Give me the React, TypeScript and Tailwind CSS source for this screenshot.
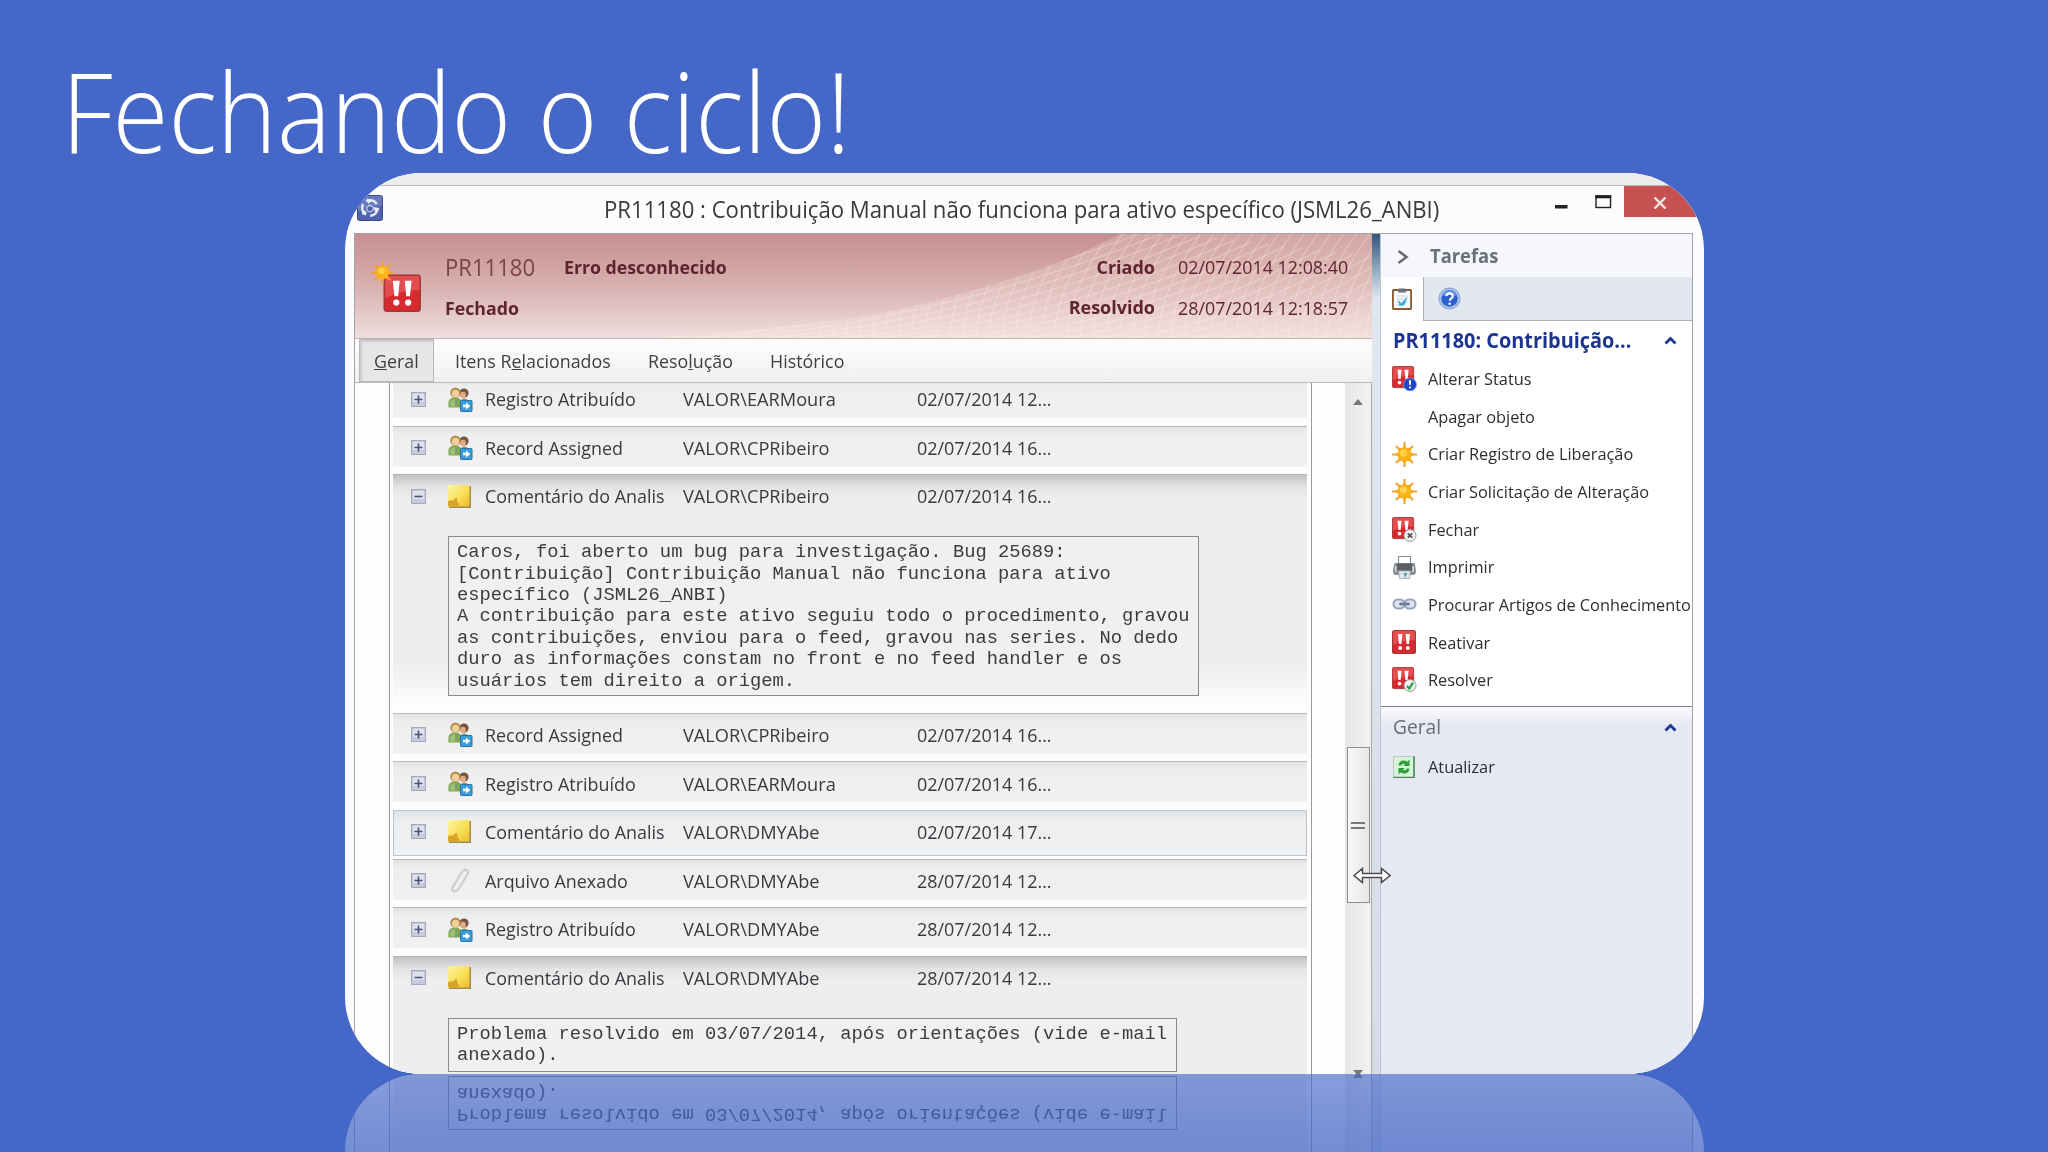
import type { ReactNode } from "react";
import clsx from "clsx";

interface HistoryRow {
  icon: "users" | "note" | "clip";
  label: string;
  user: string;
  date: string;
  selected?: boolean;
  comment?: string[];
  boxClass?: string;
}

interface Task {
  label: string;
  icon: ReactNode;
}

const history: HistoryRow[] = [
  { icon: "users", label: "Registro Atribuído", user: "VALOR\\EARMoura", date: "02/07/2014 12..." },
  { icon: "users", label: "Record Assigned", user: "VALOR\\CPRibeiro", date: "02/07/2014 16..." },
  {
    icon: "note",
    label: "Comentário do Analis",
    user: "VALOR\\CPRibeiro",
    date: "02/07/2014 16...",
    boxClass: "h-[160px] w-[751px]",
    comment: [
      "Caros, foi aberto um bug para investigação. Bug 25689:",
      "[Contribuição] Contribuição Manual não funciona para ativo",
      "específico (JSML26_ANBI)",
      "A contribuição para este ativo seguiu todo o procedimento, gravou",
      "as contribuições, enviou para o feed, gravou nas series. No dedo",
      "duro as informações constam no front e no feed handler e os",
      "usuários tem direito a origem.",
    ],
  },
  { icon: "users", label: "Record Assigned", user: "VALOR\\CPRibeiro", date: "02/07/2014 16..." },
  { icon: "users", label: "Registro Atribuído", user: "VALOR\\EARMoura", date: "02/07/2014 16..." },
  { icon: "note", label: "Comentário do Analis", user: "VALOR\\DMYAbe", date: "02/07/2014 17...", selected: true },
  { icon: "clip", label: "Arquivo Anexado", user: "VALOR\\DMYAbe", date: "28/07/2014 12..." },
  { icon: "users", label: "Registro Atribuído", user: "VALOR\\DMYAbe", date: "28/07/2014 12..." },
  {
    icon: "note",
    label: "Comentário do Analis",
    user: "VALOR\\DMYAbe",
    date: "28/07/2014 12...",
    boxClass: "h-[54px] w-[729px]",
    comment: [
      "Problema resolvido em 03/07/2014, após orientações (vide e-mail",
      "anexado).",
    ],
  },
];

function SunShape() {
  return (
    <>
      <path
        d="M12 0v24M0 12h24M3.800 3.800l16.400 16.400M20.200 3.800L3.800 20.200"
        stroke="#f0a043"
        strokeWidth="2"
        fill="none"
      />
      <path
        d="M12 2.500l2.200 3.400 4.500-.9-.9 4.500 3.700 2.500-3.700 2.500.9 4.500-4.500-.9L12 21.500l-2.200-3.400-4.500.9.9-4.500L2.500 12l3.700-2.500-.9-4.500 4.500.9z"
        fill="#f7a922"
      />
      <circle cx="12" cy="12" r="6.300" fill="#fbb31a" />
      <circle cx="11" cy="10.500" r="3.400" fill="#ffd24a" />
    </>
  );
}

function SunIcon() {
  return (
    <svg viewBox="0 0 24 24" className="size-[25px]">
      <SunShape />
    </svg>
  );
}

// two white exclamation marks on a red tile, 24x24
function ProblemShape() {
  return (
    <>
      <rect x="0.5" y="0.5" width="23" height="23" rx="1.5" fill="#d62a2e" stroke="#a33636" />
      <path d="M1 1h22v9Q12 10 1 15z" fill="#ee6a6a" opacity="0.55" />
      <path d="M6 4h4.400l-1 10H7zM13.600 4H18l-1 10h-2.400z" fill="#fff" />
      <circle cx="8.200" cy="18" r="2" fill="#fff" />
      <circle cx="15.800" cy="18" r="2" fill="#fff" />
    </>
  );
}

function ProblemIcon({ badge }: { badge?: "alert" | "close" | "check" }) {
  return (
    <svg viewBox="0 0 25 25" className="size-[25px]">
      <g transform={badge ? "scale(0.92)" : "scale(1)"}>
        <ProblemShape />
      </g>
      {badge === "alert" && (
        <>
          <circle cx="18" cy="18.500" r="6.500" fill="#1f46c4" stroke="#7d95e0" strokeWidth="0.800" />
          <path d="M16.800 14.200h2.400l-.5 5h-1.400z" fill="#fff" />
          <circle cx="18" cy="21.500" r="1.100" fill="#fff" />
        </>
      )}
      {badge === "close" && (
        <>
          <circle cx="18" cy="18.500" r="6" fill="#f1f1f1" stroke="#999" />
          <path d="M15.800 16.300l4.400 4.400M20.200 16.300l-4.400 4.400" stroke="#555" strokeWidth="1.800" />
        </>
      )}
      {badge === "check" && (
        <>
          <circle cx="18" cy="18.500" r="6" fill="#f1f1f1" stroke="#999" />
          <path d="M15 19l2.300 2.600 3.600-6" stroke="#2ba24c" strokeWidth="2.200" fill="none" />
        </>
      )}
    </svg>
  );
}

function PrinterIcon() {
  return (
    <svg viewBox="0 0 25 25" className="size-[25px]">
      <path d="M6.500 9V1.500h12V9" fill="#fff" stroke="#8b9096" strokeWidth="1.200" />
      <path d="M2 10q0-2 2-2h17q2 0 2 2l1 6q0 4-3 4H4q-3 0-3-4z" fill="#858a90" />
      <rect x="5" y="8.500" width="15" height="7" fill="#5b5f65" />
      <rect x="3" y="11" width="1.600" height="6" fill="#d5d8db" />
      <rect x="20.400" y="11" width="1.600" height="6" fill="#d5d8db" />
      <path d="M6.500 16h12l-1 7.500h-10z" fill="#dde6ec" stroke="#9aa3aa" strokeWidth="0.800" />
      <path d="M11.500 18h4l-2.500 4.500z" fill="#4d9aa5" />
    </svg>
  );
}

function LinkIcon() {
  return (
    <svg viewBox="0 0 25 13" className="h-[13px] w-[25px]">
      <rect x="1.500" y="1.500" width="11" height="9" rx="4.500" fill="#dfe6f0" stroke="#93a3bd" strokeWidth="2" />
      <rect x="12.500" y="1.500" width="11" height="9" rx="4.500" fill="#dfe6f0" stroke="#93a3bd" strokeWidth="2" />
      <rect x="7" y="4.600" width="11" height="3" rx="1.500" fill="#6f809c" />
    </svg>
  );
}

function RefreshIcon() {
  return (
    <svg viewBox="0 0 22 22" className="ml-px size-[22px]">
      <rect x="0.500" y="0.500" width="21" height="21" fill="#d9f2da" stroke="#b7cdb8" />
      <path d="M21 0.500v21H0.500" stroke="#4a8a56" strokeWidth="1.600" fill="none" />
      <path d="M5.500 9.500Q6 4.500 11 4.500q2 0 3.200 1.200L16.500 3.800V10h-6.300l2-2Q9 6.800 8.400 9.500z" fill="#2c9e3a" />
      <path d="M16.500 12.500q-.5 5-5.500 5-2 0-3.200-1.200L5.500 18.200V12h6.300l-2 2q3.200 1.200 3.800-1.500z" fill="#2c9e3a" />
    </svg>
  );
}

function ClipboardIcon() {
  return (
    <svg viewBox="0 0 20 22" className="h-[22px] w-5">
      <rect x="0.900" y="2" width="18.200" height="19" rx="1" fill="#f7fafc" stroke="#8a5a35" strokeWidth="1.900" />
      <rect x="6" y="0.400" width="8" height="4" rx="1" fill="#6b7178" />
      <path d="M4.500 8h11M4.500 11h11M4.500 14h11M4.500 17h8" stroke="#c4d2df" strokeWidth="1" />
      <path d="M6 11.500l3 4 6.500-7-3 8.500-5 1z" fill="#34a7dd" />
    </svg>
  );
}

function HelpIcon() {
  return (
    <svg viewBox="0 0 24 24" className="size-[23px]">
      <circle cx="12" cy="12" r="11" fill="#a9c3ee" stroke="#8099d0" />
      <circle cx="12" cy="12" r="8.600" fill="#2c5fd0" />
      <path d="M4.500 9.500a8 8 0 0 1 15 0q-7.500-3-15 0z" fill="#6f9bea" />
      <path d="M8.700 9.600q.4-3 3.400-3t3.300 2.800q0 1.700-1.800 2.800-1.300.9-1.300 2.200" fill="none" stroke="#fff" strokeWidth="2.200" />
      <circle cx="12.200" cy="17.500" r="1.300" fill="#fff" />
    </svg>
  );
}

function UsersIcon() {
  return (
    <svg viewBox="0 0 25 25" className="size-[25px]">
      <path d="M12 21q-1-9 4-9.500t6 8z" fill="#8c9b76" />
      <circle cx="16" cy="6" r="4.600" fill="#7a5240" />
      <ellipse cx="15" cy="8" rx="2.800" ry="3.200" fill="#e0ac86" />
      <path d="M.5 20.500V15q1-4.500 6.500-4.500T14 15v5.500z" fill="#7ea457" />
      <path d="M2 19.500v-4q1-3 5-3.500v7.500z" fill="#9dbf78" />
      <circle cx="7.500" cy="5.600" r="5.200" fill="#b58a4e" />
      <ellipse cx="7.600" cy="6.600" rx="3.600" ry="3.900" fill="#efd09a" />
      <rect x="12.500" y="13.500" width="11.500" height="11" rx="1" fill="#3a9cd8" stroke="#2773ac" />
      <path d="M15 17.700h3v-2.200l4.300 3.500-4.300 3.500v-2.200h-3z" fill="#fff" />
    </svg>
  );
}

function NoteIcon() {
  return (
    <svg viewBox="0 0 23 23" className="size-[23px]">
      <defs>
        <linearGradient id="note" x1="0" y1="0" x2="1" y2="1">
          <stop offset="0" stopColor="#fdf6a4" />
          <stop offset="0.600" stopColor="#f8dc50" />
          <stop offset="1" stopColor="#e9bb33" />
        </linearGradient>
      </defs>
      <path d="M22 1v21H1" stroke="#a08c4c" strokeWidth="2" fill="none" />
      <rect x="0" y="0" width="21.500" height="21.500" fill="url(#note)" />
      <path d="M0 21.500v-5q3-2 5-.5 1-3 4-3 0 3 1 5 2 1 1 3.500z" fill="#d9a32a" />
    </svg>
  );
}

function ClipIcon() {
  return (
    <svg viewBox="0 0 23 25" className="h-[25px] w-[23px]">
      <path
        d="M5 19L14 4q2.500-3 5-1.500 2 1.800 0 4.500L10.500 21q-2.500 3-5 2-2.500-1.600-.5-4.500l7-11"
        fill="none"
        stroke="#cdced2"
        strokeWidth="2.200"
      />
    </svg>
  );
}

function AppIcon() {
  return (
    <svg viewBox="0 0 26 26" className="size-[26px]">
      <rect x="0.500" y="0.500" width="25" height="25" rx="2" fill="#4f62ab" stroke="#39498a" />
      <path d="M1 1h24v10Q12 10 1 17z" fill="#7c8cc8" opacity="0.600" />
      <circle cx="13" cy="13" r="7.800" fill="none" stroke="#e9edfb" strokeWidth="2.400" strokeDasharray="12 4.300" />
      <path d="M10 3.500l5 2-4 3.500zM22.500 13l-4.500 4-1.500-5zM5 20l.5-6 4.500 3.500z" fill="#e9edfb" />
      <path d="M10 12l3-2 3 2v3.500l-3 1.500-3-1.500z" fill="none" stroke="#c7d0f0" strokeWidth="1.200" />
    </svg>
  );
}

function ExpandIcon({ open }: { open: boolean }) {
  return (
    <svg viewBox="0 0 15 15" className="size-[15px]">
      <rect x="0.700" y="0.700" width="13.600" height="13.600" fill="#dfe1ec" stroke="#a6a9bb" strokeWidth="1.400" />
      <path d="M1.400 10h12.200v3.600H1.400z" fill="#c8cbdb" />
      <path d={open ? "M3.500 7.500h8" : "M3.500 7.500h8M7.500 3.500v8"} stroke="#4a5175" strokeWidth="1.600" />
    </svg>
  );
}

function CaretUp() {
  return (
    <svg viewBox="0 0 13 9" className="h-[9px] w-[13px]">
      <path d="M1.500 7.500L6.500 2.500l5 5" fill="none" stroke="#1d3694" strokeWidth="2.800" />
    </svg>
  );
}

// curved net in the right corner of the form header
function HeaderMesh() {
  const fan = Array.from({ length: 56 }, (_, i) => i);
  return (
    <svg viewBox="0 0 740 104" className="absolute top-0 right-0 h-[104px] w-[740px]">
      <defs>
        <clipPath id="net">
          <path d="M18 104Q150 96 248 79 330 63 428 28 462 14 488 0H740V104z" />
        </clipPath>
      </defs>
      <g clipPath="url(#net)">
        <rect width="740" height="104" fill="#fbe6e2" opacity="0.260" />
        {fan.map((i) => (
          <path
            key={`a${i}`}
            d={`M${150 + i * 13} 110Q${146 + i * 13} 60 ${196 + i * 13} -6`}
            stroke="#fff3ee"
            strokeWidth="1.500"
            opacity="0.260"
            fill="none"
          />
        ))}
        {fan.slice(0, 26).map((i) => (
          <path
            key={`b${i}`}
            d={`M${20 + i * 26} ${105 + i * 0.6}Q${260 + i * 22} ${84 + i * 3} ${500 + i * 17} ${-6 + i * 2}`}
            stroke="#fff3ee"
            strokeWidth="1.500"
            opacity="0.260"
            fill="none"
          />
        ))}
      </g>
    </svg>
  );
}

const tasks: Task[] = [
  { label: "Alterar Status", icon: <ProblemIcon badge="alert" /> },
  { label: "Apagar objeto", icon: null },
  { label: "Criar Registro de Liberação", icon: <SunIcon /> },
  { label: "Criar Solicitação de Alteração", icon: <SunIcon /> },
  { label: "Fechar", icon: <ProblemIcon badge="close" /> },
  { label: "Imprimir", icon: <PrinterIcon /> },
  { label: "Procurar Artigos de Conhecimento", icon: <LinkIcon /> },
  { label: "Reativar", icon: <ProblemIcon /> },
  { label: "Resolver", icon: <ProblemIcon badge="check" /> },
];

function TaskLink({ label, icon }: Task) {
  return (
    <div className="flex h-[37.65px] items-center">
      <span className="ml-[11px] flex w-9 shrink-0 items-center">{icon}</span>
      <span className="origin-left scale-x-[0.960] text-[17px] whitespace-nowrap text-[#2e2e2e]">{label}</span>
    </div>
  );
}

function TitleBar() {
  return (
    <div className="flex h-[47px] shrink-0 items-start bg-[#fcfcfd]">
      <div className="mt-[9px] ml-3">
        <AppIcon />
      </div>
      <div className="mt-1.5 ml-[221px] w-[880px] origin-left scale-x-[0.923] text-2xl leading-[34px] whitespace-nowrap text-[#3a3a3a]">
        PR11180 : Contribuição Manual não funciona para ativo específico (JSML26_ANBI)
      </div>
      <svg viewBox="0 0 60 20" className="mt-[7px] ml-[71px] h-5 w-[60px] shrink-0">
        <rect x="0" y="12" width="12.500" height="3.500" fill="#222" />
        <rect x="41" y="3" width="14.500" height="11.500" fill="none" stroke="#222" strokeWidth="1.400" />
        <rect x="40.300" y="2.300" width="16" height="3" fill="#222" />
      </svg>
      <div className="ml-auto flex h-[31px] w-20 shrink-0 justify-center bg-[#c75050]">
        <svg viewBox="0 0 14 12" className="mt-[11px] mr-[9px] h-3 w-3.5">
          <path d="M1.500 0.500l11 11M12.500 0.500l-11 11" stroke="#f6e4e4" strokeWidth="2.400" />
        </svg>
      </div>
    </div>
  );
}

function FormHeader() {
  return (
    <div className="relative flex h-[105px] shrink-0 border-b border-[#c4b3b3] bg-linear-to-b from-[#c58f8f] via-[#d8b0b0] to-[#efdfde] text-[18px] font-bold text-[#5e2530]">
      <HeaderMesh />
      <svg viewBox="0 0 50 54" className="relative mt-[25px] ml-4 h-[54px] w-[50px]">
        <g transform="translate(12.500 15.500) scale(1.560)">
          <ProblemShape />
        </g>
        <g transform="translate(0 2) scale(0.960)">
          <SunShape />
        </g>
      </svg>
      <div className="relative ml-6 pt-[13px]">
        <div className="flex h-10 items-center">
          <span className="w-[119px] origin-left scale-x-[0.92] text-2xl font-normal text-[#7a4349]">PR11180</span>
          <span className="origin-left scale-x-[0.985]">Erro desconhecido</span>
        </div>
        <div className="flex h-[42px] items-center">
          <span className="origin-left scale-x-[0.985]">Fechado</span>
        </div>
      </div>
      <div className="relative mr-6 ml-auto grid grid-cols-[100px_170px] grid-rows-[40px_41px] items-center gap-x-[23px] pt-[13px]">
        <span className="origin-right text-right">Criado</span>
        <span className="origin-left scale-x-[0.966] text-[18.5px] font-normal whitespace-nowrap">02/07/2014 12:08:40</span>
        <span className="origin-right text-right">Resolvido</span>
        <span className="origin-left scale-x-[0.966] text-[18.5px] font-normal whitespace-nowrap">28/07/2014 12:18:57</span>
      </div>
    </div>
  );
}

function TabBar() {
  return (
    <div className="flex h-11 shrink-0 items-stretch border-b border-[#b9b9bc] bg-linear-to-b from-[#fdfdfd] to-[#f0f0f0] text-[18.5px] leading-[44px] text-[#3f3f42]">
      <div className="ml-1 w-[75px] border border-[#b6b8ba] bg-[#e6e7e8] leading-[42px] shadow-[inset_2px_2px_2px_#c9cbcc]">
        <div className="ml-3.5 origin-left scale-x-[0.965]">
          <u>G</u>eral
        </div>
      </div>
      <div className="ml-[21px] w-[193px] origin-left scale-x-[0.965]">
        Itens R<u>e</u>lacionados
      </div>
      <div className="w-[122px] origin-left scale-x-[0.965]">
        Reso<u>l</u>ução
      </div>
      <div className="origin-left scale-x-[0.965]">Histórico</div>
    </div>
  );
}

function HistoryEntry({ row }: { row: HistoryRow }) {
  const open = !!row.comment;
  return (
    <div className={clsx("w-[914px] shrink-0", open ? "h-[238.600px]" : "h-[48.600px]")}>
      <div
        className={clsx(
          "border-t",
          open && "h-[230px] border-[#b4b4b8] bg-[linear-gradient(#c2c2c5,#e4e4e6_12px,#eeeef0_24px,#eeeef0_190px,#fdfdfe)]",
          !open && !row.selected && "h-[41px] border-[#b8b8bb] bg-linear-to-b from-[#e4e4e6] via-[#eeeeef] via-20% to-[#f1f1f2]",
          row.selected &&
            "h-[46px] border border-[#b9c4cd] bg-linear-to-b from-[#dfe2e5] via-[#eceeef] via-20% to-[#eff0f1]"
        )}
      >
        <div className={clsx("flex h-[42px] items-center text-[18.5px] whitespace-nowrap text-[#3a3a3e]", row.selected && "-ml-px")}>
          <span className="ml-[18px] w-[37px]">
            <ExpandIcon open={open} />
          </span>
          <span className="w-[37px]">
            {row.icon === "users" && <UsersIcon />}
            {row.icon === "note" && <NoteIcon />}
            {row.icon === "clip" && <ClipIcon />}
          </span>
          <span className="w-[198px] origin-left scale-x-[0.968]">{row.label}</span>
          <span className="w-[234px] origin-left scale-x-[0.984]">{row.user}</span>
          <span className="origin-left scale-x-[0.970]">{row.date}</span>
        </div>
        {row.comment && (
          <div
            className={clsx(
              "mt-[19px] ml-[55px] border border-[#8b8b8f] bg-[#f0f0f1] pt-[5px] pl-2 font-['Liberation_Mono',monospace] text-[18.800px] leading-[21.400px] whitespace-pre text-[#3c3c3c]",
              row.boxClass
            )}
          >
            {row.comment.map((line) => (
              <div key={line}>{line}</div>
            ))}
          </div>
        )}
      </div>
    </div>
  );
}

function ScrollBar() {
  return (
    <div className="flex w-[27px] shrink-0 flex-col items-center border-r border-[#a9aab0] bg-linear-to-r from-[#e6e6e8] to-[#f3f2f3]">
      <svg viewBox="0 0 10 6" className="mt-4 h-1.5 w-2.5 shrink-0">
        <path d="M5 0l5 6H0z" fill="#77777c" />
      </svg>
      <div className="mt-[342px] flex h-[156px] w-[23px] shrink-0 flex-col items-center justify-center gap-[3px] border-[1.500px] border-[#8f8f93] bg-linear-to-r from-[#f8f8f8] to-[#e6e6e8]">
        <span className="h-0.5 w-3.5 bg-[#77777c]" />
        <span className="h-0.5 w-3.5 bg-[#77777c]" />
      </div>
      <svg viewBox="0 0 10 6" className="mt-auto h-1 w-2.5 shrink-0" preserveAspectRatio="xMidYMin slice">
        <path d="M0 0h10L5 6z" fill="#77777c" />
      </svg>
    </div>
  );
}

function TaskPane() {
  return (
    <div className="flex w-[311px] shrink-0 flex-col overflow-hidden bg-white">
      <div className="flex h-[43px] shrink-0 items-center bg-[#f5f7fd]">
        <svg viewBox="0 0 12 14" className="mt-0.5 ml-4 h-3.5 w-3">
          <path d="M1.500 1l8 6-8 6" fill="none" stroke="#6a6c72" strokeWidth="2.600" />
        </svg>
        <span className="ml-[21px] origin-left scale-x-[0.92] text-xl font-bold text-[#6d7078]">Tarefas</span>
      </div>
      <div className="flex h-11 shrink-0">
        <div className="flex w-[42px] items-center pl-[11px]">
          <ClipboardIcon />
        </div>
        <div className="flex flex-1 items-center border-b border-l border-[#a9b1bd] bg-[#e3e7ee] pl-3.5">
          <HelpIcon />
        </div>
      </div>
      <div className="flex h-[39px] shrink-0 items-center">
        <span className="ml-3 w-[271px] origin-left scale-x-[0.947] text-[21px] font-bold whitespace-nowrap text-[#1c3590]">
          PR11180: Contribuição...
        </span>
        <CaretUp />
      </div>
      {tasks.map((task) => (
        <TaskLink key={task.label} {...task} />
      ))}
      <div className="mt-[7px] flex-1 border-t border-[#80838b] bg-[linear-gradient(#fbfbfe,#e6e8f3_18px)]">
        <div className="flex h-[41px] items-center">
          <span className="ml-3 w-[271px] origin-left scale-x-[0.96] text-xl text-[#6c6d72]">Geral</span>
          <CaretUp />
        </div>
        <TaskLink label="Atualizar" icon={<RefreshIcon />} />
      </div>
    </div>
  );
}

export default function App() {
  return (
    <main className="h-[1152px] w-[2048px] overflow-hidden bg-[#4568c8] font-['Open_Sans',sans-serif]">
      <h1 className="h-[173px] origin-left scale-x-[0.917] pt-[50px] pl-[67px] text-[111px] leading-[120px] font-light whitespace-nowrap text-white">
        Fechando o ciclo!
      </h1>
      <div className="relative ml-[345px] flex h-[901px] w-[1359px] flex-col overflow-hidden rounded-[77px] bg-[#fcfcfd] [-webkit-box-reflect:below_0px_linear-gradient(transparent,rgba(0,0,0,0.25)_91%,rgba(0,0,0,0.36))]">
        <div className="h-[13px] shrink-0 border-b border-[#b9b9bb] bg-[#eeedee]" />
        <TitleBar />
        <div className="ml-[9px] flex w-[1339px] flex-1 overflow-hidden border-x border-t border-[#a3a3a8]">
          <div className="flex w-[1017px] shrink-0 flex-col">
            <FormHeader />
            <TabBar />
            <div className="flex h-[691px] overflow-hidden bg-[#fdfdfe]">
              <div className="w-[35px] shrink-0 border-r border-[#98989d]" />
              <div className="-mt-1.5 ml-[3px] flex w-[918px] shrink-0 flex-col overflow-hidden">
                {history.map((row, i) => (
                  <HistoryEntry key={i} row={row} />
                ))}
              </div>
              <div className="w-[34px] shrink-0 border-l border-[#98989d]" />
              <ScrollBar />
            </div>
          </div>
          <div className="w-[9px] shrink-0 border-r border-[#b9c8d8] bg-[linear-gradient(#34547a,#9fb4c8_40px,#dfe7ef_65px,#d6dce6)]" />
          <TaskPane />
        </div>
        {/* column resize cursor */}
        <svg viewBox="0 0 38 17" className="absolute top-[694px] left-[1008px] h-[17px] w-[38px]">
          <path
            d="M1 8.500L9.500 1.500v5h19v-5L37 8.500l-8.500 7v-5h-19v5z"
            fill="#fff"
            stroke="#4a4a4e"
            strokeWidth="1.500"
          />
        </svg>
      </div>
    </main>
  );
}
